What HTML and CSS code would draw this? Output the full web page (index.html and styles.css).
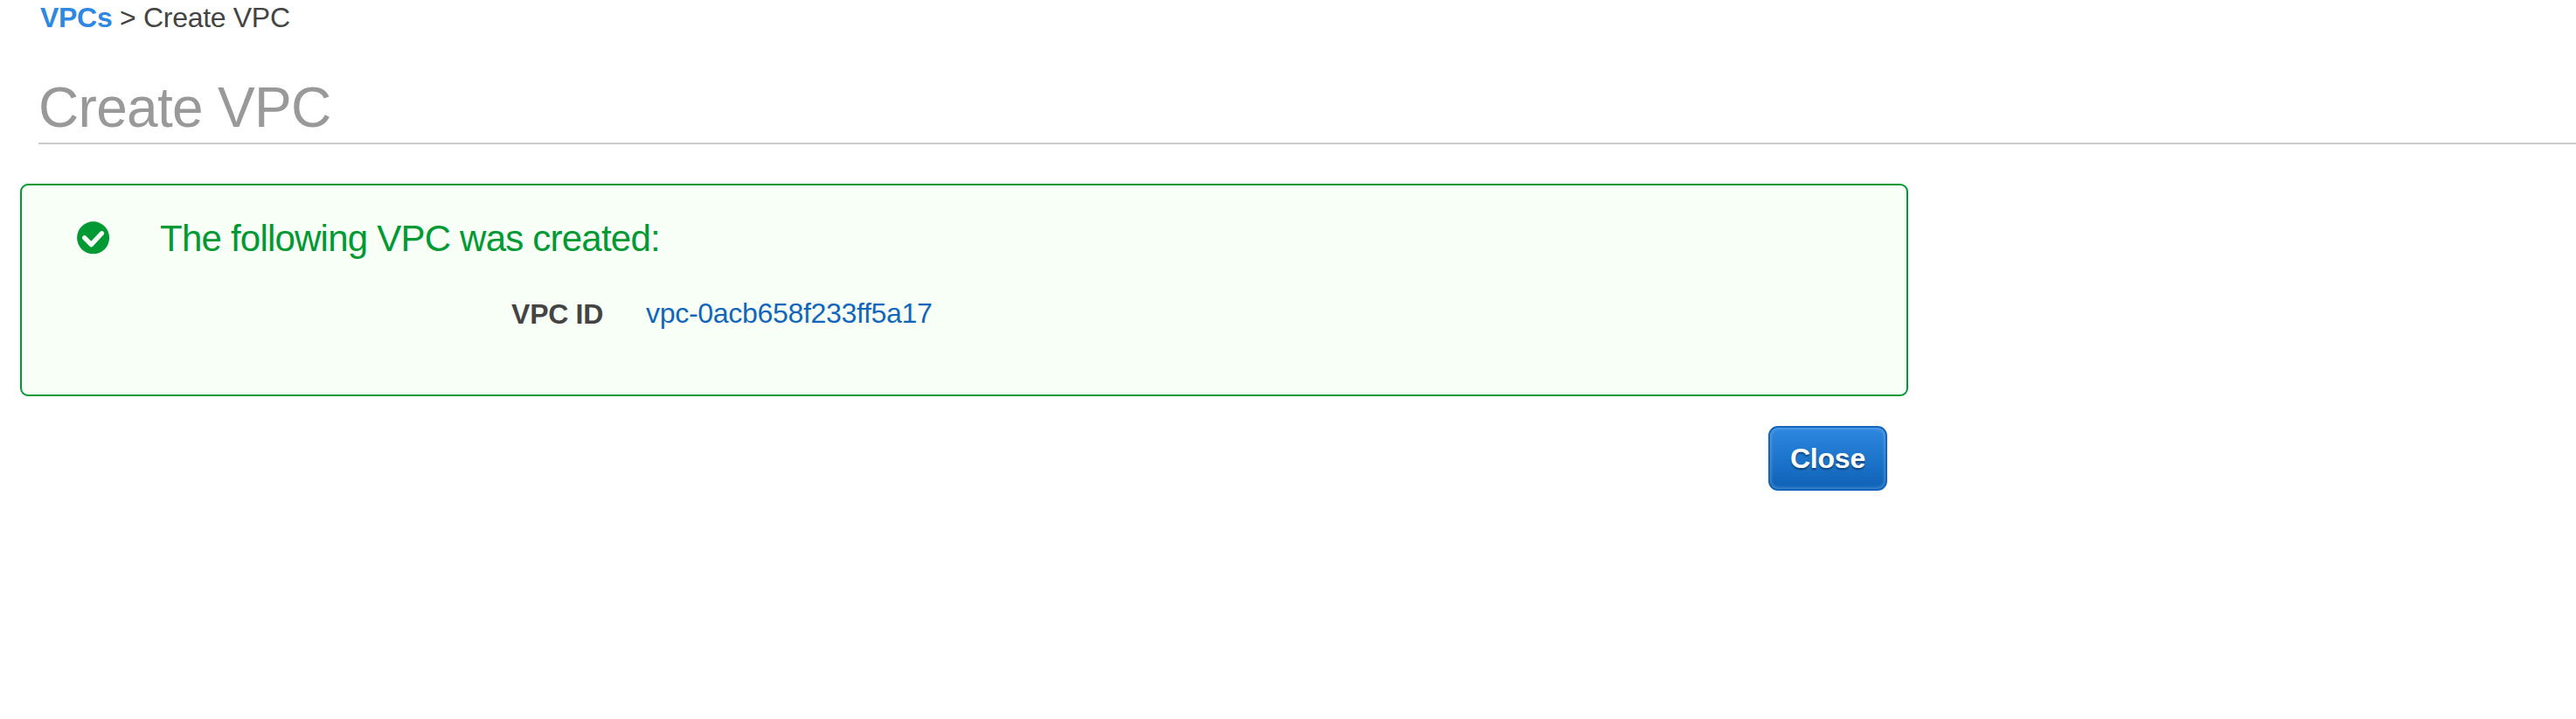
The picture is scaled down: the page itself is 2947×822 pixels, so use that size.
FILE: index.html
```html
<!DOCTYPE html>
<html lang="en">
<head>
<meta charset="utf-8">
<title>Create VPC</title>
<link rel="stylesheet" href="styles.css">
</head>
<body>
<nav class="breadcrumb"><a class="crumb-link" href="#">VPCs</a> &gt; Create VPC</nav>
<h1 class="page-title">Create VPC</h1>
<main class="content">
  <section class="alert">
    <svg class="alert-icon" viewBox="0 0 38 38" aria-hidden="true">
      <circle cx="18.6" cy="18.8" r="18.5" fill="#093"/>
      <path d="M8.7 18.8l7.7 7.8L28.4 13.8" fill="none" stroke="#f7fff7" stroke-width="5.3" stroke-linecap="round" stroke-linejoin="round"/>
    </svg>
    <div class="alert-body">
      <h2 class="alert-title">The following VPC was created:</h2>
      <dl class="details">
        <dt class="label">VPC ID</dt>
        <dd class="value"><a class="value-link" href="#">vpc-0acb658f233ff5a17</a></dd>
      </dl>
    </div>
  </section>
  <div class="actions"><button class="close-button" type="button">Close</button></div>
</main>
</body>
</html>
```

FILE: styles.css
```css
* {
  box-sizing: border-box;
}

body {
  margin: 0;
  padding-top: 2px;
  background: #fff;
  color: #444;
  font: 32px/36px "Liberation Sans", Arial, sans-serif;
  letter-spacing: -0.3px;
  overflow: hidden;
}

a {
  text-decoration: none;
}

.breadcrumb {
  padding-left: 46px;
}

.crumb-link {
  color: #2e87e0;
  font-weight: bold;
}

.page-title {
  margin: 49px 0 0 44px;
  padding-bottom: 4px;
  border-bottom: 2px solid #ccc;
  color: #999;
  font-size: 64px;
  font-weight: normal;
  letter-spacing: -0.7px;
  line-height: 72px;
}

.content {
  width: 2160px;
  margin: 45px 0 0 23px;
}

.alert {
  display: flex;
  height: 243px;
  padding: 36px 63px;
  border: 2px solid #093;
  border-radius: 9px;
  background: #f7fff7;
}

.alert-icon {
  flex: none;
  width: 38px;
  height: 38px;
  margin-top: 5px;
}

.alert-body {
  margin-left: 57px;
}

.alert-title {
  margin: 1px 0 0;
  color: #093;
  font-size: 42px;
  font-weight: normal;
  letter-spacing: -0.78px;
  line-height: 48px;
}

.details {
  display: grid;
  grid-template-columns: 507px auto;
  column-gap: 49px;
  margin: 43px 0 0;
}

.label {
  padding-top: 1px;
  font-weight: bold;
  text-align: right;
}

.value {
  margin: 0;
}

.value-link {
  color: #1166bb;
}

.actions {
  display: flex;
  justify-content: flex-end;
  padding: 34px 24px 0 0;
}

.close-button {
  width: 136px;
  height: 74px;
  padding: 0 0 1px;
  border: 2px solid #1166bb;
  border-radius: 11px;
  background: linear-gradient(#2e87e0, #1166bb 90%);
  box-shadow: inset 0 0 4px rgba(255, 255, 255, 0.4);
  color: #fff;
  font: bold 32px/36px "Liberation Sans", Arial, sans-serif;
  letter-spacing: -0.2px;
  text-shadow: 0 2px 2px rgba(0, 0, 0, 0.4);
}
```
